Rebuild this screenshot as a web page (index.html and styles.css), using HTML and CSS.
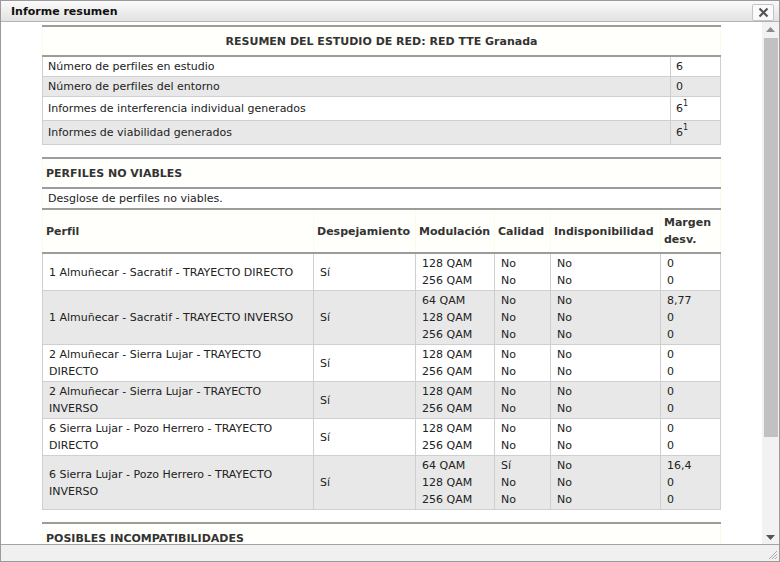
FILE: index.html
```html
<!DOCTYPE html>
<html lang="es">

<head>
    <meta charset="UTF-8" />
    <title>Informe resumen</title>
    <link rel="stylesheet" href="styles.css">
</head>

<body>
    <div class="dialog">
        <div class="titlebar">
            <span class="title">Informe resumen</span>
            <button class="close-btn" title="Cerrar">
                <svg width="11" height="11" viewBox="0 0 11 11">
                    <path d="M1.5 1.5 L9.5 9.5 M9.5 1.5 L1.5 9.5" stroke="#555" stroke-width="2.2" />
                </svg>
            </button>
        </div>

        <div class="dialog-body">
            <div class="content">
                <table class="report summary">
                    <colgroup>
                        <col />
                        <col class="col-val" />
                    </colgroup>
                    <thead>
                        <tr>
                            <th colspan="2" class="caption center">RESUMEN DEL ESTUDIO DE RED: RED TTE Granada</th>
                        </tr>
                    </thead>
                    <tbody>
                        <tr>
                            <td>Número de perfiles en estudio</td>
                            <td>6</td>
                        </tr>
                        <tr class="alt">
                            <td>Número de perfiles del entorno</td>
                            <td>0</td>
                        </tr>
                        <tr>
                            <td>Informes de interferencia individual generados</td>
                            <td>6<sup>1</sup></td>
                        </tr>
                        <tr class="alt">
                            <td>Informes de viabilidad generados</td>
                            <td>6<sup>1</sup></td>
                        </tr>
                    </tbody>
                </table>

                <table class="report profiles">
                    <colgroup>
                        <col class="c-perfil" />
                        <col class="c-desp" />
                        <col class="c-mod" />
                        <col class="c-cal" />
                        <col class="c-ind" />
                        <col class="c-marg" />
                    </colgroup>
                    <thead>
                        <tr>
                            <th colspan="6" class="caption">PERFILES NO VIABLES</th>
                        </tr>
                        <tr>
                            <td colspan="6" class="desc">Desglose de perfiles no viables.</td>
                        </tr>
                        <tr class="colnames">
                            <th>Perfil</th>
                            <th>Despejamiento</th>
                            <th>Modulación</th>
                            <th>Calidad</th>
                            <th>Indisponibilidad</th>
                            <th>Margen<br>desv.</th>
                        </tr>
                    </thead>
                    <tbody>
                        <tr>
                            <td>1 Almuñecar - Sacratif - TRAYECTO DIRECTO</td>
                            <td>Sí</td>
                            <td>128 QAM<br>256 QAM</td>
                            <td>No<br>No</td>
                            <td>No<br>No</td>
                            <td>0<br>0</td>
                        </tr>
                        <tr class="alt">
                            <td>1 Almuñecar - Sacratif - TRAYECTO INVERSO</td>
                            <td>Sí</td>
                            <td>64 QAM<br>128 QAM<br>256 QAM</td>
                            <td>No<br>No<br>No</td>
                            <td>No<br>No<br>No</td>
                            <td>8,77<br>0<br>0</td>
                        </tr>
                        <tr>
                            <td>2 Almuñecar - Sierra Lujar - TRAYECTO DIRECTO</td>
                            <td>Sí</td>
                            <td>128 QAM<br>256 QAM</td>
                            <td>No<br>No</td>
                            <td>No<br>No</td>
                            <td>0<br>0</td>
                        </tr>
                        <tr class="alt">
                            <td>2 Almuñecar - Sierra Lujar - TRAYECTO INVERSO</td>
                            <td>Sí</td>
                            <td>128 QAM<br>256 QAM</td>
                            <td>No<br>No</td>
                            <td>No<br>No</td>
                            <td>0<br>0</td>
                        </tr>
                        <tr>
                            <td>6 Sierra Lujar - Pozo Herrero - TRAYECTO DIRECTO</td>
                            <td>Sí</td>
                            <td>128 QAM<br>256 QAM</td>
                            <td>No<br>No</td>
                            <td>No<br>No</td>
                            <td>0<br>0</td>
                        </tr>
                        <tr class="alt">
                            <td>6 Sierra Lujar - Pozo Herrero - TRAYECTO INVERSO</td>
                            <td>Sí</td>
                            <td>64 QAM<br>128 QAM<br>256 QAM</td>
                            <td>Sí<br>No<br>No</td>
                            <td>No<br>No<br>No</td>
                            <td>16,4<br>0<br>0</td>
                        </tr>
                    </tbody>
                </table>

                <table class="report">
                    <thead>
                        <tr>
                            <th class="caption">POSIBLES INCOMPATIBILIDADES</th>
                        </tr>
                    </thead>
                </table>
            </div>

            <div class="scrollbar">
                <div class="sb-arrow">
                    <svg width="9" height="5" viewBox="0 0 9 5"><path d="M0 5 L4.5 0 L9 5 Z" fill="#8a8a8a" /></svg>
                </div>
                <div class="sb-track">
                    <div class="sb-thumb"></div>
                </div>
                <div class="sb-arrow">
                    <svg width="9" height="5" viewBox="0 0 9 5"><path d="M0 0 L9 0 L4.5 5 Z" fill="#555" /></svg>
                </div>
            </div>
        </div>

        <div class="footer">
            <svg class="grip" width="10" height="10" viewBox="0 0 10 10">
                <path d="M9 1 L1 9 M9 4 L4 9 M9 7 L7 9" stroke="#aaa" stroke-width="1" />
            </svg>
        </div>
    </div>
</body>

</html>
```

FILE: styles.css
```css
body {
    margin: 0;
    font-family: "DejaVu Sans", Verdana, sans-serif;
    font-size: 11px;
    color: #222;
    background: #fff;
}

.dialog {
    width: 780px;
    height: 562px;
    box-sizing: border-box;
    border: 1px solid #9a9a9a;
    display: flex;
    flex-direction: column;
    overflow: hidden;
}

.titlebar {
    height: 20px;
    flex: none;
    display: flex;
    align-items: center;
    justify-content: space-between;
    padding: 0 5px 0 10px;
    background: linear-gradient(#fafafa, #e2e2e2);
    border-bottom: 1px solid #b4b4b4;
}

.title {
    font-weight: bold;
    font-size: 11px;
    color: #111;
}

.close-btn {
    width: 22px;
    height: 17px;
    margin-top: 3px;
    padding: 0;
    border: 1px solid #c4c4c4;
    border-radius: 2px;
    background: #fbfbfb;
    display: flex;
    align-items: center;
    justify-content: center;
}

.dialog-body {
    flex: 1;
    display: flex;
    min-height: 0;
}

.content {
    flex: 1;
    overflow: hidden;
    padding: 3px 41px 0;
}

/* tablas del informe */
.report {
    width: 100%;
    border-collapse: collapse;
    table-layout: fixed;
    margin-bottom: 12px;
    line-height: 17px;
}

.report td {
    border: 1px solid #cfcfcf;
    padding: 1px 5px;
    vertical-align: middle;
}

.report tr.alt td {
    background: #e8e8e8;
}

.report th {
    text-align: left;
    font-weight: bold;
    color: #333;
    padding: 4px 3px;
    background: #fffffb;
    border-left: 1px solid #fbfbe8;
    border-right: 1px solid #fbfbe8;
}

.report th.caption {
    border-top: 2px solid #9c9c9c;
    border-bottom: 2px solid #9c9c9c;
    padding: 6px 3px 5px;
}

.report th.center {
    text-align: center;
}

.col-val {
    width: 50px;
}

.report sup {
    font-size: 8px;
    line-height: 0;
    vertical-align: 6px;
}

.summary tbody tr:nth-child(3) td,
.summary tbody tr:nth-child(4) td {
    padding: 3px 5px 3px;
}

.desc {
    border-left-color: #fbfbe8 !important;
    border-right-color: #fbfbe8 !important;
    border-bottom: 2px solid #9c9c9c !important;
    padding: 1px 5px 1px !important;
}

.colnames th {
    padding: 4px 3px 4px;
    border-bottom: 2px solid #9c9c9c;
}

.c-perfil {
    width: 271px;
}

.c-desp {
    width: 102px;
}

.c-mod {
    width: 79px;
}

.c-cal {
    width: 56px;
}

.c-ind {
    width: 110px;
}

.profiles tbody td {
    padding: 1px 5px 1px 6px;
}

/* barra de desplazamiento */
.scrollbar {
    width: 17px;
    flex: none;
    display: flex;
    flex-direction: column;
    background: #f2f2f2;
}

.sb-arrow {
    height: 14px;
    display: flex;
    align-items: center;
    justify-content: center;
}

.sb-track {
    flex: 1;
    padding: 2px 1px 0 2px;
}

.sb-thumb {
    height: 399px;
    background: #c1c1c1;
}

.footer {
    height: 16px;
    flex: none;
    background: #f0f0f0;
    border-top: 1px solid #a4a4a4;
    display: flex;
    justify-content: flex-end;
    align-items: flex-end;
}

.grip {
    margin: 0 1px 1px 0;
}
```
